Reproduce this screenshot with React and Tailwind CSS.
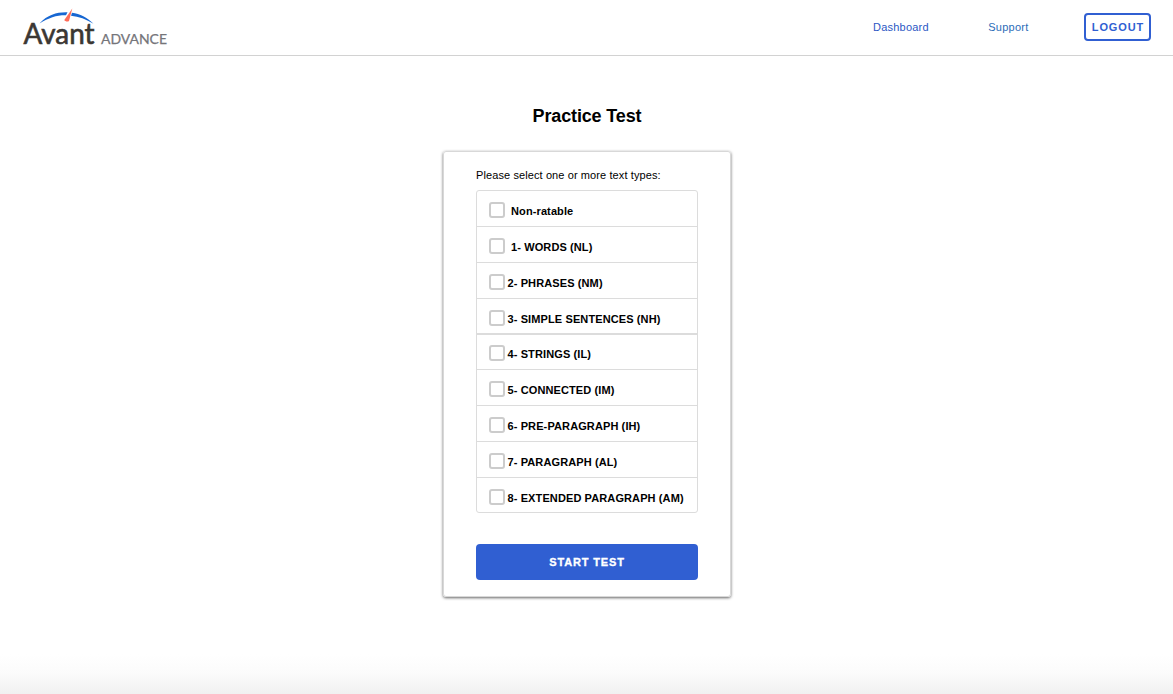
import { useState } from "react";

const textTypes = [
    { label: "Non-ratable", row: "h-9 border-b pt-[11px]", gap: "ml-1.5" },
    { label: "1- WORDS (NL)", row: "h-9 border-b pt-[11px]", gap: "ml-1.5" },
    { label: "2- PHRASES (NM)", row: "h-9 border-b pt-[11px]", gap: "ml-[2.5px]" },
    { label: "3- SIMPLE SENTENCES (NH)", row: "h-9 border-b-2 pt-[11px]", gap: "ml-[2.5px]" },
    { label: "4- STRINGS (IL)", row: "h-[35px] border-b pt-[10px]", gap: "ml-[2.5px]" },
    { label: "5- CONNECTED (IM)", row: "h-9 border-b pt-[11px]", gap: "ml-[2.5px]" },
    { label: "6- PRE-PARAGRAPH (IH)", row: "h-9 border-b pt-[11px]", gap: "ml-[2.5px]" },
    { label: "7- PARAGRAPH (AL)", row: "h-9 border-b pt-[11px]", gap: "ml-[2.5px]" },
    { label: "8- EXTENDED PARAGRAPH (AM)", row: "h-[34px] pt-[11px]", gap: "ml-[2.5px]" },
];

function Logo() {
    return (
        <svg width="150" height="50" viewBox="0 0 150 50" className="block">
            <text x="3.5" y="43.5" textLength="71" lengthAdjust="spacingAndGlyphs" fontSize="28" fill="#3b3733" stroke="#3b3733" strokeWidth="0.6" fontFamily="Lato, sans-serif">Avant</text>
            <text x="81" y="44" textLength="66" lengthAdjust="spacingAndGlyphs" fontSize="14" fill="#75757a" stroke="#75757a" strokeWidth="0.25" fontFamily="Lato, sans-serif">ADVANCE</text>
            <path d="M19.5 23.5C28 14.5 37 12 47.5 12.3L46 15.2C37 15 29 17.5 19.5 23.5Z" fill="#1767d2" />
            <path d="M52 12.8C60 14 67 17.5 73.5 23.7C66 19 59 16.5 51 15.7Z" fill="#1767d2" />
            <path d="M52.3 8.5L44.3 20C45 21.5 47.5 22 49 21Z" fill="#ff6b57" />
        </svg>
    );
}

export default function App() {
    const [selected, setSelected] = useState([]);

    const toggle = (label) => {
        setSelected(
            selected.includes(label) ? selected.filter((item) => item !== label) : [...selected, label]
        );
    };

    return (
        <div className="flex h-[694px] flex-col bg-white font-['Liberation_Sans',sans-serif] text-black">
            <header className="flex h-14 shrink-0 items-start justify-between border-b border-[#d2d2d2] pl-5 pr-[22px]">
                <Logo />
                <nav className="flex items-center pt-[13px] text-[11px]">
                    <a href="#" className="mr-[59.5px] tracking-[0.2px] text-[#2b57c4]">Dashboard</a>
                    <a href="#" className="mr-[55.5px] tracking-[0.25px] text-[#2b6cb8]">Support</a>
                    <button className="h-7 w-[67px] rounded-[4px] border-2 border-[#305fd2] pl-px text-[11px] font-bold tracking-[0.9px] text-[#305fd2]">
                        LOGOUT
                    </button>
                </nav>
            </header>

            <main className="flex flex-1 flex-col items-center pl-px">
                <h1 className="mt-[49px] text-[18px] font-bold leading-[22px] tracking-[-0.15px]">Practice Test</h1>
                <div className="mt-6 h-[446px] w-[288px] rounded-[3px] border border-[#d8d8d8] px-8 shadow-[0_1px_3px_rgba(0,0,0,0.6)]">
                    <p className="mt-4 whitespace-nowrap text-[11px] leading-[14px] tracking-[0.1px]">Please select one or more text types:</p>
                    <div className="mt-2 rounded-[3px] border border-[#dcdcdc]">
                        {textTypes.map((type) => (
                            <label key={type.label} className={`flex items-start border-[#dcdcdc] pl-3 ${type.row}`}>
                                <input
                                    type="checkbox"
                                    checked={selected.includes(type.label)}
                                    onChange={() => toggle(type.label)}
                                    className="h-4 w-4 shrink-0 appearance-none rounded-[3px] border-2 border-[#ccc] checked:bg-[#305fd2]"
                                />
                                <span className={`mt-0.5 whitespace-nowrap text-[11px] font-bold leading-[14px] tracking-[0.11px] ${type.gap}`}>
                                    {type.label}
                                </span>
                            </label>
                        ))}
                    </div>
                    <button className="mt-[31px] h-9 w-full rounded-[4px] bg-[#305fd2] text-[11px] font-bold tracking-[0.85px] text-white [-webkit-text-stroke:0.3px_white]">
                        START TEST
                    </button>
                </div>
            </main>

            <div className="h-10 shrink-0 bg-linear-to-b from-white via-[#fbfbfb] to-[#f1f1f1]" />
        </div>
    );
}
